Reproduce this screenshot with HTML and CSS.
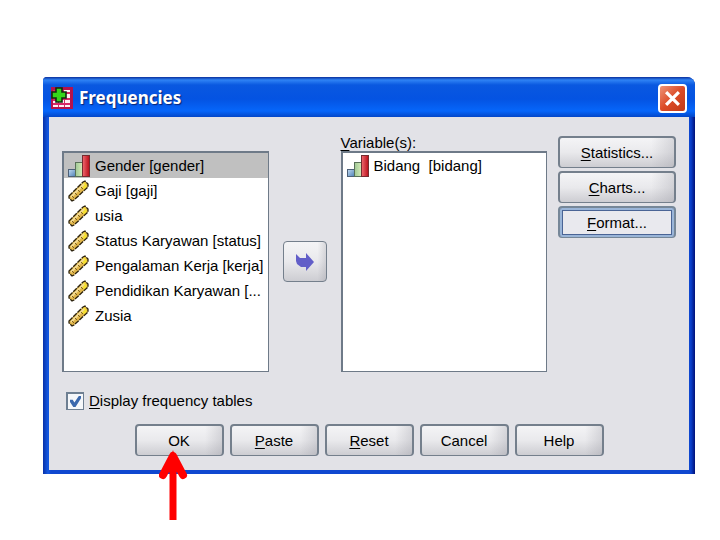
FILE: index.html
```html
<!DOCTYPE html>
<html lang="id">
<head>
    <meta charset="UTF-8">
    <meta name="viewport" content="width=device-width, initial-scale=1.0">
    <title>Frequencies</title>
    <link rel="stylesheet" href="styles.css">
</head>
<body>
    <!-- shared icons -->
    <svg class="defs" aria-hidden="true">
        <defs>
            <linearGradient id="blue" x1="0" y1="0" x2="1" y2="1">
                <stop offset="0" stop-color="#c4dcf2"/>
                <stop offset="1" stop-color="#4c7fb5"/>
            </linearGradient>
            <linearGradient id="green" x1="0" y1="0" x2="1" y2="0">
                <stop offset="0" stop-color="#9fc795"/>
                <stop offset="1" stop-color="#d5ecb8"/>
            </linearGradient>
            <linearGradient id="red" x1="0" y1="0" x2="1" y2="0">
                <stop offset="0" stop-color="#f06a70"/>
                <stop offset="1" stop-color="#b80d18"/>
            </linearGradient>
        </defs>
        <symbol id="ordinal" viewBox="0 0 22 22">
            <rect x="0.5" y="14.5" width="7" height="7" fill="url(#blue)" stroke="#4d6078"/>
            <rect x="7.5" y="7.5" width="7" height="14" fill="url(#green)" stroke="#587058"/>
            <rect x="14.5" y="0.5" width="7" height="21" fill="url(#red)" stroke="#752c30"/>
        </symbol>
        <symbol id="scale" viewBox="0 0 22 22">
            <path d="M1 16L15 2l2-1 3 3v3L6 20l-2 1-3-3z" fill="#e0b548"/>
            <path d="M14 4l2-2 3 3-1 3-2 1-3-2z" fill="#f5e030"/>
            <path d="M3 17L16 4" stroke="#f4dc94" stroke-width="2"/>
            <path d="M6 18l-2-2M9 15l-2-2M12 12l-2-2M15 9l-2-2" stroke="#7d5f22" stroke-width="1"/>
            <path d="M1 16L15 2l2-1 3 3v3L6 20l-2 1-3-3z" fill="none" stroke="#2b220e" stroke-width="1.3" stroke-dasharray="5 1"/>
        </symbol>
    </svg>

    <main class="window">
        <header class="titlebar">
            <svg class="app-icon" viewBox="0 0 22 22" aria-hidden="true">
                <rect width="22" height="22" fill="#b5124c"/>
                <path d="M2 3h17v17H2z" fill="#d52a66"/>
                <path d="M13 3h6v2h-6zM14 7h5v4h-5zM2 14h5v2H2zM8 13h5v3H8zM14 13h5v3h-5zM2 18h5v2H2zM8 18h5v2H8zM14 18h5v2h-5z" fill="#fff0f4"/>
                <path d="M5 1h6v4h4v6h-4v4H5v-4H1V5h4z" fill="#35d51b" stroke="#102b10" stroke-width="1.6"/>
            </svg>
            <h1>Frequencies</h1>
            <button class="close" type="button" aria-label="Close">
                <svg viewBox="0 0 16 16" aria-hidden="true">
                    <path d="M2 2l12 12M14 2L2 14" stroke="#fff" stroke-width="3"/>
                </svg>
            </button>
        </header>

        <form class="content">
            <div class="panels">
                <ul class="list source" role="listbox" aria-label="Variables available">
                    <li class="selected" role="option" aria-selected="true"><svg><use href="#ordinal"/></svg>Gender [gender]</li>
                    <li role="option"><svg><use href="#scale"/></svg>Gaji [gaji]</li>
                    <li role="option"><svg><use href="#scale"/></svg>usia</li>
                    <li role="option"><svg><use href="#scale"/></svg>Status Karyawan [status]</li>
                    <li role="option"><svg><use href="#scale"/></svg>Pengalaman Kerja [kerja]</li>
                    <li role="option"><svg><use href="#scale"/></svg>Pendidikan Karyawan [...</li>
                    <li role="option"><svg><use href="#scale"/></svg>Zusia</li>
                </ul>

                <button class="btn move" type="button" aria-label="Move variable">
                    <svg viewBox="0 0 20 18" aria-hidden="true">
                        <path d="M1 1l4 4h6V0l8 9-8 9v-4H6l-4-3-1-3z" fill="#625ec8"/>
                    </svg>
                </button>

                <div class="target">
                    <span class="label" id="variables"><u>V</u>ariable(s):</span>
                    <ul class="list" role="listbox" aria-labelledby="variables">
                        <li role="option"><svg><use href="#ordinal"/></svg>Bidang&nbsp; [bidang]</li>
                    </ul>
                </div>

                <div class="side">
                    <button class="btn" type="button"><span><u>S</u>tatistics...</span></button>
                    <button class="btn" type="button"><span><u>C</u>harts...</span></button>
                    <button class="btn focused" type="button"><span><u>F</u>ormat...</span></button>
                </div>
            </div>

            <label class="check">
                <input type="checkbox" checked>
                <span><u>D</u>isplay frequency tables</span>
            </label>

            <div class="actions">
                <div class="ok">
                    <button class="btn" type="button">OK</button>
                    <svg class="pointer" viewBox="0 0 30 70" aria-hidden="true">
                        <path d="M14 8v62" stroke="#f00" stroke-width="7"/>
                        <path d="M4 25L14 6l10 19" fill="none" stroke="#f00" stroke-width="8" stroke-linecap="round" stroke-linejoin="round"/>
                        <path d="M14 0L7 22h14z" fill="#f00"/>
                    </svg>
                </div>
                <button class="btn" type="button"><span><u>P</u>aste</span></button>
                <button class="btn" type="button"><span><u>R</u>eset</span></button>
                <button class="btn" type="button">Cancel</button>
                <button class="btn" type="button">Help</button>
            </div>
        </form>
    </main>
</body>
</html>
```
FILE: styles.css
```css
* {
    box-sizing: border-box;
}

body {
    min-height: 100vh;
    margin: 0;
    padding: 77px 25px 20px 43px;
    background: #fff;
    color: #000;
    font-family: "Liberation Sans", Arial, sans-serif;
    font-size: 15px;
    line-height: 16px;
}

.defs {
    position: absolute;
    width: 0;
    height: 0;
}

.window {
    padding: 0 6px 4px;
    background: linear-gradient(90deg, #0831a8, #1459e2 5px, #0f48d0 8px, #0f48d0 calc(100% - 6px), #0a3fcb calc(100% - 4px), #001078);
    border-radius: 4px 8px 0 0;
}

/* Title bar */
.titlebar {
    display: flex;
    align-items: center;
    height: 40px;
    margin: 0 -6px;
    padding: 2px 8px 0 8px;
    background: linear-gradient(#0b2f9c, #2f83f5 3px, #0a58e0 8px, #0453e2 22px, #0666fa 34px, #0346c8);
    border-radius: 4px 8px 0 0;
}

.app-icon {
    width: 22px;
    height: 22px;
}

h1 {
    flex: 1;
    margin: 0 0 0 6px;
    color: #fff;
    font-family: "Noto Sans", sans-serif;
    font-size: 17px;
    line-height: 24px;
    text-shadow: 1px 1px 1px #0a2472;
}

.close {
    display: flex;
    align-items: center;
    justify-content: center;
    width: 29px;
    height: 29px;
    padding: 0;
    background: linear-gradient(135deg, #ee9478, #dc4b27 50%, #c23a17);
    border: 2px solid #fff;
    border-radius: 4px;
}

.close svg {
    width: 17px;
    height: 17px;
}

/* Dialog body */
.content {
    padding: 19px 13px 14px;
    background: #e2e2e7;
}

.panels {
    display: grid;
    grid-template-columns: 1fr 44px 1fr 115px;
    column-gap: 14px;
}

.list {
    min-height: 221px;
    margin: 0;
    padding: 0;
    background: #fff;
    border: 1px solid #6e7a88;
    border-width: 2px 1px 1px 2px;
    list-style: none;
}

.source {
    margin-top: 15px;
}

.list li {
    display: flex;
    align-items: center;
    gap: 5px;
    height: 25px;
    padding: 1px 0 0 4px;
    white-space: nowrap;
}

.list svg {
    flex: none;
    width: 22px;
    height: 22px;
}

.list .selected {
    background: #c0c0c0;
}

.label {
    display: block;
    height: 15px;
    line-height: 13px;
}

u {
    text-decoration-thickness: 1px;
    text-underline-offset: 2px;
}

.side {
    display: flex;
    flex-direction: column;
    gap: 3px;
    margin-left: -3px;
}

/* Buttons */
.btn {
    height: 32px;
    padding: 0;
    background: linear-gradient(90deg, transparent 80%, rgba(150, 150, 160, 0.3)), linear-gradient(#f4f4f6, #e9e9ec 50%, #cdcdd2);
    border: 2px solid #747f8c;
    border-bottom-width: 1px;
    border-radius: 4px;
    color: #000;
    font: inherit;
}

.focused {
    background: #e9e9ee;
    border-color: #768798;
    box-shadow: inset 0 0 0 2px #9ab5d8, inset 0 0 0 3px #4a6495;
}

.move {
    display: flex;
    align-items: center;
    justify-content: center;
    align-self: center;
    height: 41px;
    margin-top: 15px;
    border-width: 1px;
}

.move svg {
    width: 20px;
    height: 18px;
}

.check {
    display: flex;
    align-items: center;
    gap: 5px;
    width: max-content;
    margin: 20px 0 14px 4px;
}

.check input {
    appearance: none;
    width: 18px;
    height: 18px;
    margin: 0;
    background: #f5f7fa;
    border: 2px solid #6e7f92;
    border-width: 2px 1px 1px 2px;
}

.check input:checked::before {
    content: "";
    display: block;
    width: 11px;
    height: 11px;
    margin: 2px;
    background: #3b68ad;
    clip-path: polygon(0 35%, 25% 35%, 40% 60%, 80% 0, 100% 0, 100% 20%, 50% 100%, 30% 100%, 0 55%);
}

.actions {
    display: flex;
    justify-content: center;
    gap: 6px;
}

.actions .btn {
    width: 89px;
}

.ok {
    position: relative;
}

/* Red arrow laid over the OK button */
.pointer {
    position: absolute;
    top: 26px;
    left: 24px;
    width: 30px;
    height: 70px;
}
```
